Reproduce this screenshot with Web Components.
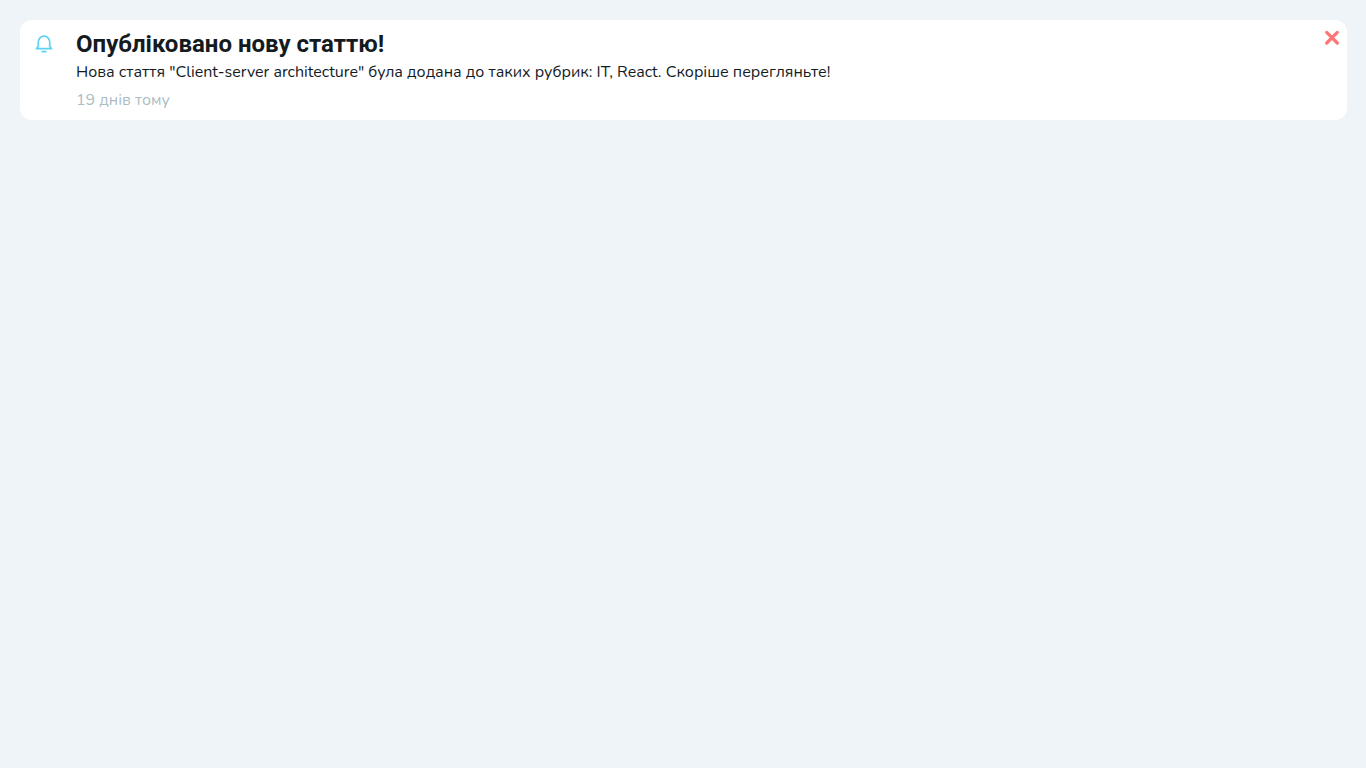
<!DOCTYPE html>
<html lang="uk">
<head>
<meta charset="utf-8">
<title>Сповіщення</title>
<style>
body { margin: 0; background: #eef4f7; }
</style>
</head>
<body>
<notification-list>
  <notification-card>
    <span slot="title">Опубліковано нову статтю!</span>
    <span slot="message">Нова стаття "Client-server architecture" була додана до таких рубрик: IT, React. Скоріше перегляньте!</span>
    <span slot="time">19 днів тому</span>
  </notification-card>
</notification-list>
<script>
class NotificationList extends HTMLElement {
  constructor() {
    super();
    this.attachShadow({ mode: 'open' }).innerHTML = `
      <style>
        :host { display: block; }
        main { display: flex; flex-direction: column; gap: 20px; padding: 20px 19px 20px 20px; }
      </style>
      <main><slot></slot></main>`;
  }
}
class BellIcon extends HTMLElement {
  constructor() {
    super();
    this.attachShadow({ mode: 'open' }).innerHTML = `
      <style>
        :host { display: block; color: #5cd3f3; }
        svg { display: block; width: 24px; height: 24px; }
      </style>
      <svg viewBox="0 0 24 24" fill="none" stroke="currentColor" aria-hidden="true">
        <path stroke-width="1.7" stroke-linejoin="round" d="M6.3 14.2V9.9a5.7 5.7 0 0 1 11.4 0v4.3l1.9 2.5H4.4zM9.5 19.7h5"/>
      </svg>`;
  }
}
class NotificationCard extends HTMLElement {
  constructor() {
    super();
    this.attachShadow({ mode: 'open' }).innerHTML = `
      <style>
        :host { display: block; }
        article { display: flex; align-items: flex-start; background: #fff; border-radius: 12px; padding: 8px 7px 8px 12px; }
        bell-icon { padding: 4px 20px 0 0; }
        .text { flex: 1; min-width: 0; font: 16px/24px Nunito, "Noto Sans", sans-serif; color: #141b1f; }
        h2 { margin: 0; font: 700 24px/32px Roboto, sans-serif; }
        p { margin: 0; }
        time { display: block; margin-top: 4px; color: #acbdc2; }
        button { display: block; margin: 0; padding: 0; border: 0; background: none; color: #ff7575; cursor: pointer; }
        button svg { display: block; width: 16px; height: 20px; }
      </style>
      <article>
        <bell-icon></bell-icon>
        <div class="text">
          <h2><slot name="title"></slot></h2>
          <p><slot name="message"></slot></p>
          <time><slot name="time"></slot></time>
        </div>
        <button type="button" aria-label="Закрити">
          <svg viewBox="0 0 16 20" fill="none" stroke="currentColor" stroke-width="3.2" stroke-linecap="round"><path d="M2.7 4.4l10.6 10.6M13.3 4.4l-10.6 10.6"/></svg>
        </button>
      </article>`;
    this.shadowRoot.querySelector('button').addEventListener('click', () => this.remove());
  }
}
customElements.define('bell-icon', BellIcon);
customElements.define('notification-card', NotificationCard);
customElements.define('notification-list', NotificationList);
</script>
</body>
</html>
